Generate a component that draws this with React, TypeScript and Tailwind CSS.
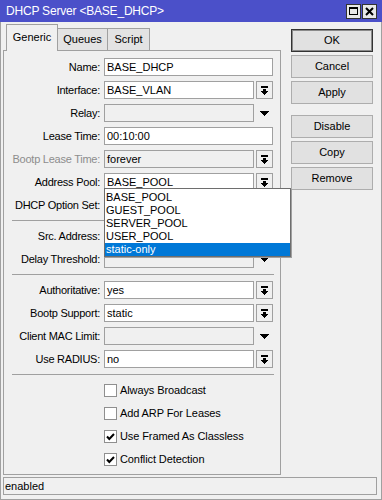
import React from 'react'

type Kind = 'text' | 'drop' | 'tri' | 'dropdis'

const font = "font-['Liberation_Sans',Arial,sans-serif]"

function BoxArrow() {
    return (
        <div className="w-[17px] h-[18px] shrink-0 border border-[#a0a0a0] bg-[#f0f0f0] flex items-center justify-center">
            <svg width="9" height="9" viewBox="0 0 9 9" shapeRendering="crispEdges" fill="#000">
                <rect x="1" y="0" width="7" height="2" />
                <rect x="3" y="3" width="3" height="2" />
                <rect x="1" y="5" width="7" height="1" />
                <rect x="2" y="6" width="5" height="1" />
                <rect x="3" y="7" width="3" height="1" />
                <rect x="4" y="8" width="1" height="1" />
            </svg>
        </div>
    )
}

function PlainArrow() {
    return (
        <div className="w-[17px] h-[18px] shrink-0 flex items-center justify-center">
            <svg width="9" height="5" viewBox="0 0 9 5" shapeRendering="crispEdges" fill="#000">
                <rect x="0" y="0" width="9" height="1" />
                <rect x="1" y="1" width="7" height="1" />
                <rect x="2" y="2" width="5" height="1" />
                <rect x="3" y="3" width="3" height="1" />
                <rect x="4" y="4" width="1" height="1" />
            </svg>
        </div>
    )
}

function Field({ label, value = '', kind, dim }: { label: string; value?: string; kind: Kind; dim?: boolean }) {
    const grey = kind === 'tri' || kind === 'dropdis'
    return (
        <div className="flex items-center h-[18px]">
            <div className={`w-[96px] text-right text-[11px] tracking-[-0.25px] leading-none ${dim ? 'text-[#8d8d8d]' : 'text-black'}`}>
                {label}
            </div>
            <div className="ml-[4px] w-[169px] flex gap-[2px]">
                <div className={`flex-1 h-[18px] border border-[#a0a0a0] pl-[2px] flex items-center text-[11px] text-black ${grey ? 'bg-[#f0f0f0]' : 'bg-white'}`}>
                    {value}
                </div>
                {kind === 'drop' || kind === 'dropdis' ? <BoxArrow /> : null}
                {kind === 'tri' ? <PlainArrow /> : null}
            </div>
        </div>
    )
}

function Sep() {
    return (
        <div className="h-[3px] pt-px pl-[8px] pr-[6px]">
            <div className="h-px bg-[#a0a0a0]" />
        </div>
    )
}

function Check({ label, checked }: { label: string; checked?: boolean }) {
    return (
        <div className="flex items-center h-[18px] pl-[100px]">
            <div className="w-[13px] h-[13px] border border-[#8f8f8f] bg-white flex items-center justify-center">
                {checked ? (
                    <svg width="11" height="11" viewBox="0 0 11 11">
                        <path d="M2 5.5 L4.3 8 L9 3" stroke="#000" strokeWidth="2" fill="none" />
                    </svg>
                ) : null}
            </div>
            <span className="ml-[3px] text-[11px] tracking-[-0.1px] text-black">{label}</span>
        </div>
    )
}

function Btn({ children, primary }: { children: React.ReactNode; primary?: boolean }) {
    return (
        <div
            className={`h-[23px] flex items-center justify-center text-[11px] text-black bg-[#e1e1e1] border ${
                primary ? 'border-[#333] shadow-[inset_0_0_0_1px_#8a8a8a]' : 'border-[#adadad]'
            }`}
        >
            {children}
        </div>
    )
}

const pools = ['BASE_POOL', 'GUEST_POOL', 'SERVER_POOL', 'USER_POOL', 'static-only']

export default function App() {
    return (
        <div className={`w-[382px] h-[500px] bg-[#f0f0f0] flex flex-col ${font}`}>
            {/* Title bar */}
            <div className="h-[22px] bg-[#4b50c9] flex items-center pl-[6px] pr-[5px] shrink-0">
                <span className="text-white text-[12px] tracking-[-0.2px] flex-1">DHCP Server &lt;BASE_DHCP&gt;</span>
                <div className="flex gap-px">
                    <div className="w-[15px] h-[15px] bg-[#e8e8e8] border border-[#333] flex items-center justify-center">
                        <div className="w-[9px] h-[8px] border border-black border-t-2" />
                    </div>
                    <div className="w-[15px] h-[15px] bg-[#e8e8e8] border border-[#333] flex items-center justify-center">
                        <svg width="9" height="9" viewBox="0 0 9 9">
                            <path d="M1 1 L8 8 M8 1 L1 8" stroke="#000" strokeWidth="2" />
                        </svg>
                    </div>
                </div>
            </div>

            <div className="flex-1 flex flex-col border-l border-r border-b border-[#a0a0a0]">
                <div className="flex pl-[2px] pt-[2px]">
                    {/* Tabs + panel */}
                    <div className="w-[278px] flex flex-col">
                        <div className="h-[26px] flex items-end pl-[3px] text-[11px] text-black">
                            <div className="relative z-10 -mb-px h-[27px] w-[52px] border border-b-0 border-[#a0a0a0] bg-[#f0f0f0] flex items-center justify-center pb-[2px]">
                                Generic
                            </div>
                            <div className="h-[22px] w-[50px] border-t border-r border-[#a0a0a0] bg-[#e3e3e3] flex items-center justify-center">
                                Queues
                            </div>
                            <div className="h-[22px] w-[42px] border-t border-r border-[#a0a0a0] bg-[#e3e3e3] flex items-center justify-center">
                                Script
                            </div>
                        </div>
                        <div className="relative h-[425px] border border-[#a0a0a0] pt-[7px] flex flex-col gap-[5px]">
                            <Field label="Name:" value="BASE_DHCP" kind="text" />
                            <Field label="Interface:" value="BASE_VLAN" kind="drop" />
                            <Field label="Relay:" kind="tri" />
                            <Field label="Lease Time:" value="00:10:00" kind="text" />
                            <Field label="Bootp Lease Time:" value="forever" kind="dropdis" dim />
                            <Field label="Address Pool:" value="BASE_POOL" kind="drop" />
                            <Field label="DHCP Option Set:" kind="tri" />
                            <Sep />
                            <Field label="Src. Address:" kind="text" />
                            <Field label="Delay Threshold:" kind="tri" />
                            <Sep />
                            <Field label="Authoritative:" value="yes" kind="drop" />
                            <Field label="Bootp Support:" value="static" kind="drop" />
                            <Field label="Client MAC Limit:" kind="tri" />
                            <Field label="Use RADIUS:" value="no" kind="drop" />
                            <Sep />
                            <Check label="Always Broadcast" />
                            <Check label="Add ARP For Leases" />
                            <Check label="Use Framed As Classless" checked />
                            <Check label="Conflict Detection" checked />

                            {/* Open pool dropdown */}
                            <div className="absolute left-[100px] top-[137px] w-[187px] bg-white border border-[#6e6e6e] shadow-[1px_1px_0_#a0a0a0] pt-[2px] z-20">
                                {pools.map((p) => (
                                    <div
                                        key={p}
                                        className={`h-[13px] pl-px flex items-center text-[11px] ${
                                            p === 'static-only' ? 'bg-[#0078d7] text-white' : 'text-black'
                                        }`}
                                    >
                                        {p}
                                    </div>
                                ))}
                            </div>
                        </div>
                    </div>

                    {/* Buttons */}
                    <div className="ml-[10px] w-[82px] pt-[5px] flex flex-col gap-[3px]">
                        <Btn primary>OK</Btn>
                        <Btn>Cancel</Btn>
                        <Btn>Apply</Btn>
                        <div className="h-[5px]" />
                        <Btn>Disable</Btn>
                        <Btn>Copy</Btn>
                        <Btn>Remove</Btn>
                    </div>
                </div>

                {/* Status bar */}
                <div className="mt-[2px] ml-[2px] w-[374px] h-[18px] border border-[#a0a0a0] flex items-center pl-px text-[11px] text-black">
                    enabled
                </div>
            </div>
        </div>
    )
}
